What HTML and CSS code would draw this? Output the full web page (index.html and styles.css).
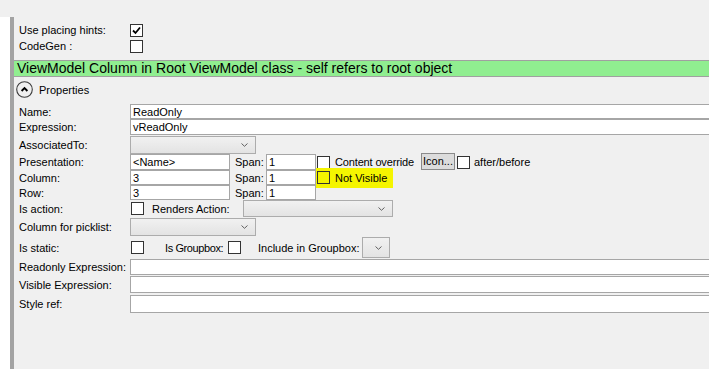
FILE: index.html
```html
<!DOCTYPE html>
<html>
<head>
<meta charset="utf-8">
<link rel="stylesheet" href="styles.css">
</head>
<body>
<div class="app">
  <div class="side"></div>
  <div class="main">
    <div class="opt-row"><span class="lbl">Use placing hints:</span><span class="cb"><svg width="11" height="11" viewBox="0 0 11 11"><path d="M2 5.5 L4.5 8 L9 2.5" fill="none" stroke="#000" stroke-width="1.8"/></svg></span></div>
    <div class="opt-row"><span class="lbl">CodeGen :</span><span class="cb"></span></div>
    <div class="banner">ViewModel Column in Root ViewModel class - self refers to root object</div>
    <div class="section">
      <span class="toggle"><svg width="17" height="17" viewBox="0 0 17 17"><circle cx="8.5" cy="8.5" r="7.8" fill="none" stroke="#3c3c3c" stroke-width="1.1"/><path d="M5.6 10 L8.5 7.1 L11.4 10" fill="none" stroke="#000" stroke-width="1.9"/></svg></span>
      <span>Properties</span>
    </div>
    <div class="props">
      <div class="row r-name"><span class="lbl">Name:</span><div class="tb wide">ReadOnly</div></div>
      <div class="row r-expr"><span class="lbl">Expression:</span><div class="tb wide">vReadOnly</div></div>
      <div class="row r-assoc"><span class="lbl">AssociatedTo:</span><div class="combo w126"><svg class="chev" width="7" height="4" viewBox="0 0 7 4"><path d="M0.5 0.5 L3.5 3.3 L6.5 0.5" fill="none" stroke="#606060" stroke-width="1"/></svg></div></div>
      <div class="row r-pres">
        <span class="lbl">Presentation:</span><div class="tb w100">&lt;Name&gt;</div>
        <span class="span-lbl">Span:</span><div class="tb w50">1</div>
        <span class="cb ml1"></span><span class="co-lbl">Content override</span>
        <span class="btn">Icon...</span>
        <span class="cb ml2"></span><span class="ab-lbl">after/before</span>
      </div>
      <div class="row r-col">
        <span class="lbl">Column:</span><div class="tb w100">3</div>
        <span class="span-lbl">Span:</span><div class="tb w50">1</div>
        <div class="hilite"><span class="cb yellow"></span><span class="nv-lbl">Not Visible</span></div>
      </div>
      <div class="row r-row">
        <span class="lbl">Row:</span><div class="tb w100">3</div>
        <span class="span-lbl">Span:</span><div class="tb w50">1</div>
      </div>
      <div class="row r-act">
        <span class="lbl">Is action:</span><span class="cb ml1"></span>
        <span class="ra-lbl">Renders Action:</span>
        <div class="combo w150"><svg class="chev" width="7" height="4" viewBox="0 0 7 4"><path d="M0.5 0.5 L3.5 3.3 L6.5 0.5" fill="none" stroke="#606060" stroke-width="1"/></svg></div>
      </div>
      <div class="row r-pick"><span class="lbl">Column for picklist:</span><div class="combo w126"><svg class="chev" width="7" height="4" viewBox="0 0 7 4"><path d="M0.5 0.5 L3.5 3.3 L6.5 0.5" fill="none" stroke="#606060" stroke-width="1"/></svg></div></div>
      <div class="row r-static">
        <span class="lbl">Is static:</span><span class="cb ml1"></span>
        <span class="gb-lbl">Is Groupbox:</span><span class="cb"></span>
        <span class="ig-lbl">Include in Groupbox:</span>
        <div class="combo w28"><svg class="chev" width="7" height="4" viewBox="0 0 7 4"><path d="M0.5 0.5 L3.5 3.3 L6.5 0.5" fill="none" stroke="#606060" stroke-width="1"/></svg></div>
      </div>
      <div class="row r-ro"><span class="lbl">Readonly Expression:</span><div class="tb wide"></div></div>
      <div class="row r-vis"><span class="lbl">Visible Expression:</span><div class="tb wide"></div></div>
      <div class="row r-style"><span class="lbl">Style ref:</span><div class="tb wide"></div></div>
    </div>
  </div>
</div>
</body>
</html>
```

FILE: styles.css
```css
* { box-sizing: border-box; }
html, body { margin: 0; padding: 0; }
body {
  background: #f0f0f0;
  font-family: "Liberation Sans", Arial, sans-serif;
  font-size: 11px;
  color: #000;
  width: 709px;
  height: 369px;
  overflow: hidden;
}
.app { display: flex; height: 369px; }
.side {
  flex: none;
  width: 14px;
  margin-top: 17px;
  background: #fff;
  border-right: 4px solid #a3a3a3;
}
.main { flex: 1; min-width: 0; overflow: hidden; padding-top: 22px; }

.opt-row { display: flex; align-items: center; height: 16px; }
.lbl { flex: none; width: 116px; padding-left: 5px; white-space: nowrap; }

.cb {
  flex: none;
  display: flex;
  align-items: center;
  justify-content: center;
  width: 13px;
  height: 13px;
  border: 1px solid #333;
  background: #fff;
}
.cb.ml1 { margin-left: 1px; }
.cb.ml2 { margin-left: 2px; }
.cb.yellow { background: #f5f500; }

.banner {
  margin-top: 6px;
  height: 17px;
  border-top: 1px solid #a0a0a0;
  border-bottom: 1px solid #a0a0a0;
  background: #90ee90;
  font-size: 14px;
  line-height: 15px;
  padding-left: 3px;
  white-space: nowrap;
}
.section {
  margin-top: 4px;
  height: 17px;
  display: flex;
  align-items: center;
  padding-left: 2px;
}
.toggle { width: 17px; height: 17px; margin-right: 6px; display: block; }
.toggle svg { display: block; }
.props { margin-top: 6px; }

.row { display: flex; align-items: center; }
.r-name { height: 15px; }
.r-expr { height: 16px; }
.r-assoc { height: 19px; padding-top: 1px; }
.r-pres { height: 16px; }
.r-col { height: 15px; }
.r-row { height: 15px; }
.r-act { height: 17px; }
.r-pick { height: 19px; padding-top: 1px; }
.r-static { height: 22px; padding-top: 1px; }
.r-ro { height: 17px; padding-top: 1px; }
.r-vis { height: 18px; padding-top: 1px; }
.r-style { height: 20px; padding-top: 2px; }

.tb {
  flex: none;
  height: 100%;
  background: #fff;
  border: 1px solid #a6a6a6;
  padding-left: 2px;
  display: flex;
  align-items: center;
  white-space: nowrap;
}
.tb.wide { flex: 1; margin-right: -6px; }
.w100 { width: 100px; }
.w50 { width: 50px; }

.combo {
  flex: none;
  height: 100%;
  border: 1px solid #acacac;
  background: linear-gradient(#f1f1f1, #e3e3e3);
  display: flex;
  align-items: center;
  justify-content: flex-end;
  padding-right: 7px;
}
.chev { display: block; }
.w126 { width: 126px; }
.w150 { width: 150px; }
.w28 { width: 28px; }

.span-lbl { flex: none; width: 31px; margin-left: 5px; }
.co-lbl { flex: none; width: 86px; margin-left: 5px; white-space: nowrap; letter-spacing: -0.15px; }
.btn {
  flex: none;
  width: 34px;
  height: 17px;
  margin-top: -2px;
  border: 1px solid #8a8a8a;
  background: #dcdcdc;
  padding-left: 1px;
  display: flex;
  align-items: center;
  white-space: nowrap;
  overflow: hidden;
}
.ab-lbl { flex: none; margin-left: 4px; white-space: nowrap; }

.hilite {
  flex: none;
  width: 77px;
  height: 20px;
  background: #f5f500;
  display: flex;
  align-items: center;
  padding-left: 1px;
}
.nv-lbl { margin-left: 5px; white-space: nowrap; }

.ra-lbl { flex: none; width: 91px; margin-left: 8px; white-space: nowrap; }
.gb-lbl { flex: none; width: 63px; margin-left: 21px; white-space: nowrap; letter-spacing: -0.4px; }
.ig-lbl { flex: none; width: 104px; margin-left: 17px; white-space: nowrap; }
```
